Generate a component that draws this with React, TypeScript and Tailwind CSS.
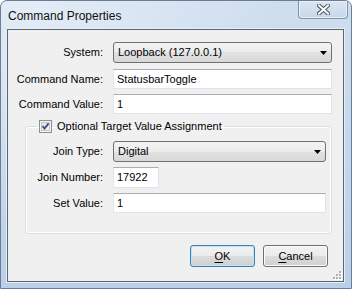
import React from "react";

function ComboBox({ value, className }: { value: string; className: string }) {
    return (
        <div className={`flex h-[21px] items-center justify-between rounded-[3px] border border-[#707070] bg-[linear-gradient(#f3f3f3,#ececec_50%,#e2e2e2_50%,#d8d8d8)] pl-[4px] pr-[4px] ${className}`}>
            <span>{value}</span>
            <svg width="7" height="4" viewBox="0 0 7 4">
                <path d="M0 0h7L3.5 4z" fill="#000" />
            </svg>
        </div>
    );
}

function TextBox({ value, className }: { value: string; className: string }) {
    return (
        <div className={`flex h-[20px] items-center border border-[#e2e3ea] border-t-[#abadb3] bg-white pl-[3px] ${className}`}>
            {value}
        </div>
    );
}

function Row({ label, labelW, children }: { label: string; labelW: string; children: React.ReactNode }) {
    return (
        <div className="flex items-center">
            <span className={`${labelW} text-right`}>{label}</span>
            {children}
        </div>
    );
}

function Button({ children, isDefault }: { children: React.ReactNode; isDefault?: boolean }) {
    return (
        <div
            className={`flex h-[22px] w-[65px] items-center justify-center rounded-[3px] border bg-[linear-gradient(#f2f2f2,#ebebeb_50%,#dddddd_50%,#cfcfcf)] ${isDefault ? "border-[#3c7fb1] shadow-[inset_0_0_0_1px_#bfe6f8]" : "border-[#707070] shadow-[inset_0_0_0_1px_#fbfbfb]"}`}
        >
            {children}
        </div>
    );
}

export default function App() {
    return (
        <div className="flex h-[289px] w-[352px] flex-col rounded-t-[7px] border border-[#6a7d92] bg-[radial-gradient(ellipse_at_8%_0%,#e3ecf6,transparent_55%),linear-gradient(#cfdeef,#bad0e8)] font-['Liberation_Sans',Arial,sans-serif] text-[11px] text-black">
            {/* title bar */}
            <div className="flex h-[28px] items-start justify-between">
                <span className="ml-[7px] mt-[8px] text-[12px] leading-[14px] text-[#111]">Command Properties</span>
                <div className="mr-[3px] flex h-[18px] w-[50px] items-center justify-center rounded-b-[4px] border border-t-0 border-[#8293a8] bg-[linear-gradient(#dbe6f2,#c6d7ea)] shadow-[inset_0_0_0_1px_#e9f0f8]">
                    <svg width="13" height="11" viewBox="0 0 13 11">
                        <path d="M2 1.5L11 9.5M11 1.5L2 9.5" stroke="#4b5461" strokeWidth="4" strokeLinecap="square" />
                        <path d="M2 1.5L11 9.5M11 1.5L2 9.5" stroke="#fff" strokeWidth="2" strokeLinecap="square" />
                    </svg>
                </div>
            </div>

            {/* client area */}
            <div className="relative ml-[6px] h-[253px] w-[337px] border border-[#5b6674] bg-[#f0f0f0] pt-[12px] shadow-[0_0_0_1px_#e6eef7]">
                <Row label="System:" labelW="w-[95px] mr-[10px]">
                    <ComboBox value="Loopback (127.0.0.1)" className="w-[219px]" />
                </Row>
                <div className="mt-[6px]">
                    <Row label="Command Name:" labelW="w-[95px] mr-[10px]">
                        <TextBox value="StatusbarToggle" className="w-[219px]" />
                    </Row>
                </div>
                <div className="mt-[5px]">
                    <Row label="Command Value:" labelW="w-[95px] mr-[10px]">
                        <TextBox value="1" className="w-[219px]" />
                    </Row>
                </div>

                <fieldset className="ml-[17px] mt-[6px] w-[307px] rounded-[3px] border border-[#d5dfe5] pb-[20px] pt-[8px] shadow-[inset_0_0_0_1px_#fff]">
                    <legend className="ml-[11px] flex h-[13px] items-center gap-[5px] px-[2px]">
                        <svg width="13" height="13" viewBox="0 0 13 13">
                            <defs>
                                <linearGradient id="cb" x1="0" y1="0" x2="1" y2="1">
                                    <stop offset="0" stopColor="#dcdcdc" />
                                    <stop offset="1" stopColor="#fbfbfb" />
                                </linearGradient>
                            </defs>
                            <rect x="0.5" y="0.5" width="12" height="12" fill="#f4f4f4" stroke="#8e8f8f" />
                            <rect x="2.5" y="2.5" width="8" height="8" fill="url(#cb)" stroke="#c6c6c6" />
                            <path d="M3.5 6.2L5.6 8.6L9.6 3.4" fill="none" stroke="#3b4f86" strokeWidth="1.8" />
                        </svg>
                        <span>Optional Target Value Assignment</span>
                    </legend>
                    <Row label="Join Type:" labelW="w-[77px] mr-[10px]">
                        <ComboBox value="Digital" className="w-[213px]" />
                    </Row>
                    <div className="mt-[5px]">
                        <Row label="Join Number:" labelW="w-[77px] mr-[10px]">
                            <TextBox value="17922" className="h-[21px] w-[46px]" />
                        </Row>
                    </div>
                    <div className="mt-[5px]">
                        <Row label="Set Value:" labelW="w-[77px] mr-[10px]">
                            <TextBox value="1" className="w-[213px]" />
                        </Row>
                    </div>
                </fieldset>

                <div className="mt-[11px] flex justify-end gap-[8px] pr-[15px]">
                    <Button isDefault>
                        <span><span className="underline underline-offset-[2px]">O</span>K</span>
                    </Button>
                    <Button>
                        <span><span className="underline underline-offset-[2px]">C</span>ancel</span>
                    </Button>
                </div>

                {/* size grip */}
                <svg className="absolute bottom-[1px] right-[1px]" width="10" height="10" viewBox="0 0 10 10">
                    <g fill="#fff">
                        <rect x="8" y="2" width="2" height="2" />
                        <rect x="5" y="5" width="2" height="2" />
                        <rect x="8" y="5" width="2" height="2" />
                        <rect x="2" y="8" width="2" height="2" />
                        <rect x="5" y="8" width="2" height="2" />
                        <rect x="8" y="8" width="2" height="2" />
                    </g>
                    <g fill="#b0b0b0">
                        <rect x="7" y="1" width="2" height="2" />
                        <rect x="4" y="4" width="2" height="2" />
                        <rect x="7" y="4" width="2" height="2" />
                        <rect x="1" y="7" width="2" height="2" />
                        <rect x="4" y="7" width="2" height="2" />
                        <rect x="7" y="7" width="2" height="2" />
                    </g>
                </svg>
            </div>
        </div>
    );
}
